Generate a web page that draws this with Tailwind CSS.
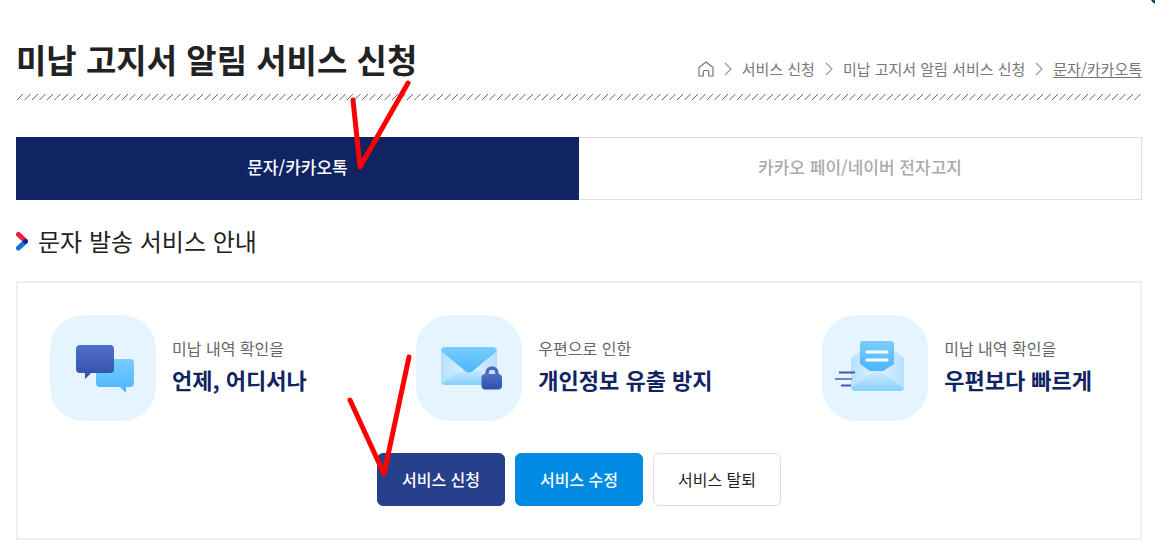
<!DOCTYPE html>
<html lang="ko">

<head>
    <meta charset="UTF-8">
    <meta name="viewport" content="width=device-width, initial-scale=1.0">
    <title>미납 고지서 알림 서비스 신청</title>
    <script src="https://cdn.jsdelivr.net/npm/@tailwindcss/browser@4"></script>
</head>

<body class="relative min-h-screen overflow-x-hidden bg-white pr-[13px] pb-4 pl-4 font-['Noto_Sans_CJK_KR',sans-serif] text-[#222]">
    <!-- Floating badge -->
    <div class="absolute -top-[13px] -right-[13px] size-[18px] rounded-full border border-[#0c3350] bg-[#0a5a8c]"></div>

    <!-- Page title -->
    <header class="flex items-end justify-between pt-[35px]">
        <h1 class="text-[33px] leading-12 font-bold">미납 고지서 알림 서비스 신청</h1>
        <nav aria-label="breadcrumb" class="pb-0.5">
            <ol class="flex items-center gap-2.5 text-[15px] leading-6 text-[#777]">
                <li>
                    <a href="#" aria-label="홈" class="block">
                        <svg class="size-4" viewBox="0 0 16 16" fill="none" stroke="#777" stroke-width="1.2">
                            <path d="M1 6.500 8 1l7 5.500V15h-4.300v-4.500a1 1 0 0 0-1-1H6.300a1 1 0 0 0-1 1V15H1z" stroke-linejoin="round" />
                        </svg>
                    </a>
                </li>
                <li class="flex items-center gap-2.5">
                    <svg class="h-4 w-2" viewBox="0 0 8 16" fill="none" stroke="#999" stroke-width="1.2"><path d="M1 2l6 6-6 6" /></svg>
                    <a href="#">서비스 신청</a>
                </li>
                <li class="flex items-center gap-2.5">
                    <svg class="h-4 w-2" viewBox="0 0 8 16" fill="none" stroke="#999" stroke-width="1.2"><path d="M1 2l6 6-6 6" /></svg>
                    <a href="#">미납 고지서 알림 서비스 신청</a>
                </li>
                <li class="flex items-center gap-2.5">
                    <svg class="h-4 w-2" viewBox="0 0 8 16" fill="none" stroke="#999" stroke-width="1.2"><path d="M1 2l6 6-6 6" /></svg>
                    <a href="#" class="underline underline-offset-2">문자/카카오톡</a>
                </li>
            </ol>
        </nav>
    </header>
    <svg class="mt-[11px] block h-1.5 w-full" aria-hidden="true">
        <defs>
            <pattern id="hatch" width="15" height="6" patternUnits="userSpaceOnUse">
                <path d="M1 6 7 0M8.500 6l6-6" stroke="#555" stroke-width=".9" />
            </pattern>
        </defs>
        <rect width="100%" height="6" fill="url(#hatch)" />
    </svg>

    <!-- Tabs -->
    <div class="mt-[37px] grid grid-cols-2 text-[17px] leading-6 font-medium">
        <a href="#" class="border border-[#102463] bg-[#102463] pt-[17px] pb-5 text-center text-white">문자/카카오톡</a>
        <a href="#" class="border border-l-0 border-[#ddd] pt-[17px] pb-5 text-center text-[#aaa]">카카오 페이/네이버 전자고지</a>
    </div>

    <!-- Section heading -->
    <h2 class="mt-[21px] flex items-center gap-2.5 text-[24px] leading-10 font-normal">
        <svg class="h-5 w-3" viewBox="0 0 12 20" fill="none" stroke-width="5" stroke-linecap="round">
            <path d="M2.500 3.500 9.500 10" stroke="#ee1c35" />
            <path d="M2.500 17 9.500 10.500" stroke="#0a74d8" />
            <path d="M9.400 10.300h.1" stroke="#1c1c8c" stroke-width="4.800" />
        </svg>
        문자 발송 서비스 안내
    </h2>

    <section class="mt-5 border-2 border-[#eee] py-8">
        <ul class="flex justify-between pr-12 pl-8">
            <li class="flex items-center gap-4">
                <span class="size-[106px] shrink-0 rounded-[34px] bg-[#e6f4ff]">
                    <svg class="size-full" viewBox="0 0 106 106">
                        <defs>
                            <linearGradient id="navy" x2="0" y2="1"><stop stop-color="#506fc8" /><stop offset="1" stop-color="#304fa8" /></linearGradient>
                            <linearGradient id="sky" x2="0" y2="1"><stop stop-color="#7accff" /><stop offset="1" stop-color="#4ab6ff" /></linearGradient>
                            <linearGradient id="pale" x2="0" y2="1"><stop stop-color="#d2edff" /><stop offset="1" stop-color="#86ceff" /></linearGradient>
                            <linearGradient id="side" x2="1"><stop stop-color="#b4dfff" /><stop offset=".4" stop-color="#dcf0ff" /><stop offset=".6" stop-color="#dcf0ff" /><stop offset="1" stop-color="#b4dfff" /></linearGradient>
                        </defs>
                        <path d="M50 44h30a4 4 0 0 1 4 4v20a4 4 0 0 1-4 4h-4v6l-6-6H50a4 4 0 0 1-4-4V48a4 4 0 0 1 4-4z" fill="url(#sky)" />
                        <path d="M30 30h30a4 4 0 0 1 4 4v20a4 4 0 0 1-4 4H41l-6 6v-6h-5a4 4 0 0 1-4-4V34a4 4 0 0 1 4-4z" fill="url(#navy)" />
                    </svg>
                </span>
                <p class="flex flex-col pb-1.5">
                    <span class="text-[16px] leading-7 text-[#666]">미납 내역 확인을</span>
                    <strong class="text-[22px] leading-[34px] font-bold text-[#102463]">언제, 어디서나</strong>
                </p>
            </li>
            <li class="flex items-center gap-4">
                <span class="size-[106px] shrink-0 rounded-[34px] bg-[#e6f4ff]">
                    <svg class="size-full" viewBox="0 0 106 106">
                        <rect x="25" y="32" width="56" height="38" rx="4" fill="url(#side)" />
                        <path d="M26 68 47 53h12l21 15q-1 2-4 2H29q-2 0-3-2z" fill="url(#pale)" />
                        <path d="M29 32h47q4 0 5 4L58 55q-5 5-10 0L25 36q1-4 4-4z" fill="url(#sky)" />
                        <path d="M71 61v-3a5 5 0 0 1 10 0v3" fill="none" stroke="#4a68be" stroke-width="3.500" />
                        <path d="M69.500 59h12.500a4 4 0 0 1 4 4v7.500a4 4 0 0 1-4 4H69.500a4 4 0 0 1-4-4V63a4 4 0 0 1 4-4z" fill="url(#navy)" />
                    </svg>
                </span>
                <p class="flex flex-col pb-1.5">
                    <span class="text-[16px] leading-7 text-[#666]">우편으로 인한</span>
                    <strong class="text-[22px] leading-[34px] font-bold text-[#102463]">개인정보 유출 방지</strong>
                </p>
            </li>
            <li class="flex items-center gap-4">
                <span class="size-[106px] shrink-0 rounded-[34px] bg-[#e6f4ff]">
                    <svg class="size-full" viewBox="0 0 106 106">
                        <path d="M29 43 40 35h31l11 8v28a4 4 0 0 1-4 4H33a4 4 0 0 1-4-4z" fill="url(#side)" />
                        <path d="M29 73 49 58q6-4 12 0l21 15q-1 3-4 3H33q-3 0-4-3z" fill="url(#pale)" />
                        <path d="M41 26h28a3 3 0 0 1 3 3v20L61 56H48L38 49V29a3 3 0 0 1 3-3z" fill="url(#sky)" />
                        <path d="M45 37h20M45 45h20" stroke="#fff" stroke-width="3" stroke-linecap="round" />
                        <path d="M17 57.500h16M19 70.500h10" stroke="#4058b4" stroke-width="2" />
                        <path d="M13 64h17" stroke="#6f86cc" stroke-width="2" />
                    </svg>
                </span>
                <p class="flex flex-col pb-1.5">
                    <span class="text-[16px] leading-7 text-[#666]">미납 내역 확인을</span>
                    <strong class="text-[22px] leading-[34px] font-bold text-[#102463]">우편보다 빠르게</strong>
                </p>
            </li>
        </ul>

        <div class="mt-8 flex justify-center gap-2.5 text-[16px] leading-6">
            <button type="button" class="w-32 rounded-md border border-[#27408b] bg-[#27408b] pt-[13px] pb-3.5 font-medium text-white">서비스 신청</button>
            <button type="button" class="w-32 rounded-md border border-[#008ae2] bg-[#008ae2] pt-[13px] pb-3.5 font-medium text-white">서비스 수정</button>
            <button type="button" class="w-32 rounded-md border border-[#ddd] bg-white pt-[13px] pb-3.5">서비스 탈퇴</button>
        </div>
    </section>

    <!-- Hand-drawn check marks over the active tab and the apply button -->
    <svg class="pointer-events-none absolute top-20 left-[345px] h-[90px] w-[70px]" viewBox="345 80 70 90" fill="none" stroke="#f00" stroke-width="5" stroke-linecap="round" stroke-linejoin="round">
        <path d="M353 100 360 167 408 83" />
    </svg>
    <svg class="pointer-events-none absolute top-[350px] left-[345px] h-[130px] w-[70px]" viewBox="345 350 70 130" fill="none" stroke="#f00" stroke-width="5" stroke-linecap="round" stroke-linejoin="round">
        <path d="M350 400 384 474 409 357" />
    </svg>
</body>

</html>
